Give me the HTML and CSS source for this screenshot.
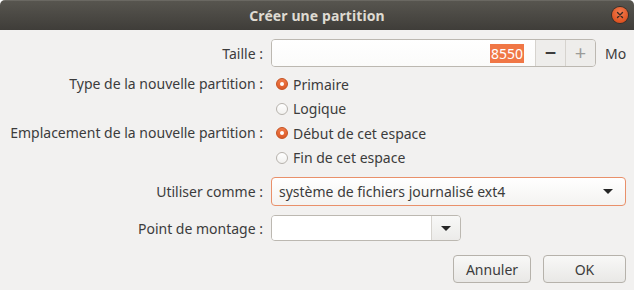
FILE: index.html
```html
<!DOCTYPE html>
<html lang="fr">
<head>
  <meta charset="UTF-8">
  <title>Créer une partition</title>
  <meta name="viewport" content="width=device-width, initial-scale=1.0">
  <link rel="stylesheet" href="styles.css">
</head>
<body>
  <div class="window">
    <header class="titlebar">
      <span class="title">Créer une partition</span>
      <span class="close">
        <svg width="8" height="8" viewBox="0 0 8 8"><path d="M1.5 1.5 L6.5 6.5 M6.5 1.5 L1.5 6.5" stroke="#3a2a22" stroke-width="1.4" stroke-linecap="round"/></svg>
      </span>
    </header>

    <main class="content">
      <div class="row row-size">
        <label class="label">Taille :</label>
        <div class="control">
          <div class="spin">
            <div class="spin-entry"><span class="selected">8550</span></div>
            <button class="spin-btn minus">−</button>
            <button class="spin-btn plus">+</button>
          </div>
          <span class="unit">Mo</span>
        </div>
      </div>

      <div class="row row-radio">
        <label class="label">Type de la nouvelle partition :</label>
        <div class="radios">
          <div class="radio checked"><span class="dot"></span>Primaire</div>
          <div class="radio"><span class="dot"></span>Logique</div>
        </div>
      </div>

      <div class="row row-radio">
        <label class="label">Emplacement de la nouvelle partition :</label>
        <div class="radios">
          <div class="radio checked"><span class="dot"></span>Début de cet espace</div>
          <div class="radio"><span class="dot"></span>Fin de cet espace</div>
        </div>
      </div>

      <div class="row row-combo">
        <label class="label">Utiliser comme :</label>
        <div class="combo focused">
          <span class="combo-text">système de fichiers journalisé ext4</span>
          <span class="arrow"></span>
        </div>
      </div>

      <div class="row row-mount">
        <label class="label">Point de montage :</label>
        <div class="mount">
          <div class="mount-entry"></div>
          <div class="mount-btn"><span class="arrow"></span></div>
        </div>
      </div>

      <div class="actions">
        <button class="btn btn-cancel">Annuler</button>
        <button class="btn btn-ok">OK</button>
      </div>
    </main>
  </div>
</body>
</html>
```

FILE: styles.css
```css
html {
  background: #ffffff;
}
body {
  margin: 0;
  font-family: "Noto Sans", "Open Sans", sans-serif;
  font-size: 14px;
  color: #3c3c3c;
}
.window {
  width: 634px;
  height: 290px;
  background: #f2f1f0;
  border-radius: 5px 5px 0 0;
  overflow: hidden;
}
.titlebar {
  height: 30px;
  background: linear-gradient(#57554f, #3f3d39);
  border-top: 1px solid #6a6862;
  box-sizing: border-box;
  display: flex;
  align-items: center;
  justify-content: center;
  position: relative;
}
.title {
  color: #dfdbd2;
  font-weight: bold;
  font-size: 14px;
  letter-spacing: 0.1px;
}
.close {
  position: absolute;
  right: 6px;
  top: 6px;
  width: 16px;
  height: 16px;
  border-radius: 50%;
  background: radial-gradient(circle at 50% 35%, #f47e52, #df5422 70%, #c9461a);
  box-shadow: 0 0 0 1px #3a2f28;
  display: flex;
  align-items: center;
  justify-content: center;
}
.content {
  padding: 9px 8px 0 8px;
  display: flex;
  flex-direction: column;
}
.row {
  display: flex;
  align-items: flex-start;
}
.label {
  width: 255px;
  flex: 0 0 255px;
  text-align: right;
  margin-right: 8px;
  white-space: nowrap;
}
.row-size {
  height: 28px;
  align-items: center;
}
.control {
  display: flex;
  align-items: center;
}
.spin {
  display: flex;
  width: 325px;
  height: 28px;
  box-sizing: border-box;
  border: 1px solid #bcb8b1;
  border-radius: 4px;
  overflow: hidden;
  box-shadow: inset 0 1px 1px rgba(0, 0, 0, 0.08);
}
.spin-entry {
  flex: 1;
  background: linear-gradient(#ffffff, #fbfbfa);
  display: flex;
  align-items: center;
  justify-content: flex-end;
  padding-right: 11px;
}
.selected {
  background: #f07746;
  color: #ffffff;
  padding: 0 1px;
  line-height: 19px;
}
.spin-btn {
  width: 30px;
  border: none;
  border-left: 1px solid #d6d3ce;
  background: #eeedeb;
  font-family: inherit;
  font-size: 20px;
  padding: 0;
  line-height: 26px;
}
.spin-btn.minus {
  color: #3c3c3c;
  font-weight: bold;
}
.spin-btn.plus {
  color: #9b9b98;
}
.unit {
  margin-left: 9px;
  color: #3c3c3c;
}
.row-radio {
  height: 49px;
}
.row-radio .label {
  line-height: 24px;
}
.row-size + .row-radio {
  margin-top: 5px;
}
.radios {
  display: flex;
  flex-direction: column;
  padding-left: 5px;
}
.radio {
  height: 24.5px;
  display: flex;
  align-items: center;
}
.dot {
  width: 12px;
  height: 12px;
  box-sizing: border-box;
  border-radius: 50%;
  border: 1px solid #b7b3ad;
  background: linear-gradient(#ffffff, #f2f1ef);
  margin-right: 5px;
  position: relative;
}
.radio.checked .dot {
  border-color: #c4501f;
  background: linear-gradient(#f07a48, #dc5a28);
}
.radio.checked .dot::after {
  content: "";
  position: absolute;
  left: 3px;
  top: 3px;
  width: 4px;
  height: 4px;
  border-radius: 50%;
  background: #ffffff;
}
.row-combo {
  margin-top: 7px;
  height: 29px;
  align-items: center;
}
.combo {
  width: 355px;
  height: 29px;
  box-sizing: border-box;
  border: 1px solid #bcb8b1;
  border-radius: 4px;
  background: linear-gradient(#ffffff, #f4f3f1);
  display: flex;
  align-items: center;
  justify-content: space-between;
  padding: 0 12px 0 7px;
}
.combo.focused {
  border-color: #e9906a;
}
.arrow {
  width: 0;
  height: 0;
  border-left: 5px solid transparent;
  border-right: 5px solid transparent;
  border-top: 5px solid #262626;
}
.row-mount {
  margin-top: 9px;
  height: 26px;
  align-items: center;
}
.mount {
  display: flex;
  width: 190px;
  height: 26px;
  box-sizing: border-box;
  border: 1px solid #bcb8b1;
  border-radius: 4px;
  overflow: hidden;
}
.mount-entry {
  flex: 1;
  background: #ffffff;
}
.mount-btn {
  width: 28px;
  border-left: 1px solid #d6d3ce;
  background: linear-gradient(#f8f8f7, #ecebe9);
  display: flex;
  align-items: center;
  justify-content: center;
}
.actions {
  display: flex;
  justify-content: flex-end;
  gap: 12px;
  margin-top: 14px;
}
.btn {
  height: 28px;
  border: 1px solid #b6b2ab;
  border-radius: 4px;
  background: linear-gradient(#f8f8f7, #e9e8e6);
  font-family: inherit;
  font-size: 14px;
  color: #3c3c3c;
  padding: 0;
}
.btn-cancel {
  width: 78px;
}
.btn-ok {
  width: 83px;
}
```
